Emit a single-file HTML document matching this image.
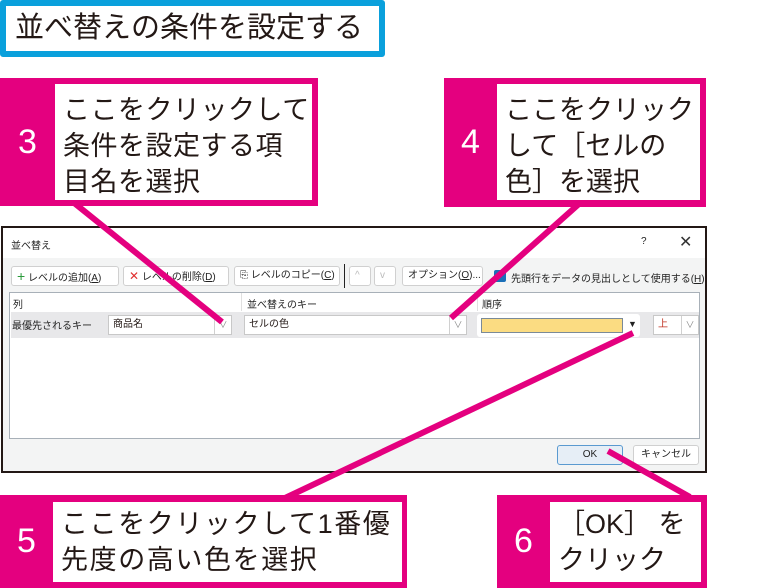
<!DOCTYPE html><html><head><meta charset="utf-8"><style>
*{margin:0;padding:0;box-sizing:border-box}
body{width:783px;height:588px;background:#fff;position:relative;overflow:hidden;font-family:"Liberation Sans","Noto Sans CJK JP",sans-serif;color:#231815}
.a{position:absolute}
.co{position:absolute;background:#e4007f}
.co .n{position:absolute;left:0;top:0;bottom:0;color:#fff;font-size:34px;display:flex;align-items:center;justify-content:center}
.co .w{position:absolute;background:#fff;font-size:27px;line-height:36px;padding-left:8px;color:#231815;white-space:nowrap}
.s{font-size:10px;color:#222;position:absolute;white-space:nowrap}
.btn{position:absolute;background:#fff;border:1px solid #d0d0d0;border-radius:3px;font-size:10px;height:20px;line-height:18px;padding:0 5px;white-space:nowrap;color:#222}
.dd{position:absolute;background:#fff;border:1px solid #c8c8c8;font-size:10px;height:20px;line-height:18px;padding-left:4px}
.arr{position:absolute;right:0;top:0;width:17px;height:18px;border-left:1px solid #d0d0d0;color:#888;font-size:9px;text-align:center}
</style></head><body>
<div class="a" style="left:0;top:0;width:385px;height:57px;border:6px solid #0aa0dc;border-radius:3px;font-size:29px;line-height:45px;padding-left:9px">並べ替えの条件を設定する</div>

<div class="a" style="left:1px;top:226px;width:706px;height:247px;border:2px solid #231815;background:#f3f4f4">
 <div class="a" style="left:0;top:0;width:702px;height:30px;background:#fff"></div>
 <div class="s" style="left:8px;top:9px">並べ替え</div>
 <div class="s" style="left:638px;top:8px">?</div>
 <div class="s" style="left:676px;top:4px;font-size:16px;color:#333">✕</div>
 <div class="btn" style="left:8px;top:38px;width:108px"><span style="color:#2a9a3a;font-size:14px">+</span> レベルの追加(<u>A</u>)</div>
 <div class="btn" style="left:120px;top:38px;width:106px"><span style="color:#e03030;font-size:12px">✕</span> レベルの削除(<u>D</u>)</div>
 <div class="btn" style="left:231px;top:38px;width:106px">⎘ レベルのコピー(<u>C</u>)</div>
 <div class="a" style="left:341px;top:36px;width:1px;height:24px;background:#222"></div>
 <div class="btn" style="left:346px;top:38px;width:22px;color:#bbb">^</div>
 <div class="btn" style="left:371px;top:38px;width:22px;color:#bbb">v</div>
 <div class="btn" style="left:399px;top:38px;width:81px">オプション(<u>O</u>)...</div>
 <div class="a" style="left:491px;top:42px;width:12px;height:12px;background:#1a6fb8;border-radius:2px"></div>
 <div class="s" style="left:508px;top:42px">先頭行をデータの見出しとして使用する(<u>H</u>)</div>
 <div class="a" style="left:6px;top:64px;width:691px;height:147px;border:1px solid #a8b0b8;background:#fff">
  <div class="s" style="left:3px;top:3px">列</div>
  <div class="a" style="left:231px;top:0;width:1px;height:18px;background:#e0e0e0"></div>
  <div class="s" style="left:237px;top:3px">並べ替えのキー</div>
  <div class="a" style="left:467px;top:0;width:1px;height:18px;background:#e0e0e0"></div>
  <div class="s" style="left:472px;top:3px">順序</div>
  <div class="a" style="left:1px;top:19px;width:688px;height:26px;background:#e8e8ea"></div>
  <div class="s" style="left:2px;top:24px">最優先されるキー</div>
  <div class="dd" style="left:98px;top:22px;width:124px">商品名<div class="arr">∨</div></div>
  <div class="dd" style="left:234px;top:22px;width:223px">セルの色<div class="arr">∨</div></div>
  <div class="a" style="left:467px;top:21px;width:163px;height:23px;background:#fff;border-radius:3px"></div>
  <div class="a" style="left:471px;top:25px;width:142px;height:15px;background:#fbdc82;border:1px solid #7a8a98"></div>
  <div class="s" style="left:618px;top:26px;font-size:9px">▼</div>
  <div class="dd" style="left:643px;top:22px;width:46px;color:#c03020">上<div class="arr">∨</div></div>
 </div>
 <div class="btn" style="left:554px;top:217px;width:66px;text-align:center;background:#e6eef6;border-color:#5a9ad0">OK</div>
 <div class="btn" style="left:630px;top:217px;width:66px;text-align:center">キャンセル</div>
</div>

<svg class="a" style="left:0;top:0" width="783" height="588"><g stroke="#e4007f" stroke-width="6" stroke-linecap="butt">
<line x1="68" y1="198" x2="222" y2="322"/><line x1="580" y1="203" x2="451" y2="318"/>
<line x1="285" y1="498" x2="633" y2="333"/><line x1="608" y1="451" x2="690" y2="497"/></g></svg>

<div class="co" style="left:0;top:78px;width:318px;height:128px"><div class="n" style="width:55px">3</div><div class="w" style="left:55px;top:6px;width:257px;height:116px;padding-top:8px;letter-spacing:0.5px">ここをクリックして<br>条件を設定する項<br>目名を選択</div></div>
<div class="co" style="left:444px;top:78px;width:262px;height:129px"><div class="n" style="width:53px">4</div><div class="w" style="left:53px;top:6px;width:203px;height:116px;padding-top:8px">ここをクリック<br>して［セルの<br>色］を選択</div></div>
<div class="co" style="left:0;top:495px;width:407px;height:93px"><div class="n" style="width:53px">5</div><div class="w" style="left:53px;top:7px;width:349px;height:80px;padding-top:4px;letter-spacing:1.6px">ここをクリックして1番優<br>先度の高い色を選択</div></div>
<div class="co" style="left:497px;top:495px;width:210px;height:93px"><div class="n" style="width:53px">6</div><div class="w" style="left:53px;top:7px;width:151px;height:80px;padding-top:4px">［OK］ を<br>クリック</div></div>
</body></html>
